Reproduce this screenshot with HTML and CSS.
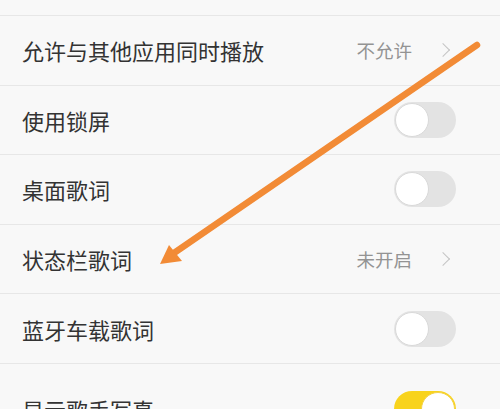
FILE: index.html
```html
<!DOCTYPE html>
<html lang="zh-CN">
<head>
    <meta charset="UTF-8">
    <meta name="viewport" content="width=device-width, initial-scale=1.0">
    <title>播放设置</title>
    <link rel="stylesheet" href="styles.css">
</head>
<body>

<!-- Settings list -->
<div class="settings-list">
    <!-- row above, scrolled out of view -->
    <div class="setting-row">
        <span class="setting-title"></span>
        <span class="switch"><span class="knob"></span></span>
    </div>
    <div class="setting-row">
        <span class="setting-title">允许与其他应用同时播放</span>
        <span class="setting-value">不允许<span class="chevron"></span></span>
    </div>
    <div class="setting-row">
        <span class="setting-title">使用锁屏</span>
        <span class="switch"><span class="knob"></span></span>
    </div>
    <div class="setting-row">
        <span class="setting-title">桌面歌词</span>
        <span class="switch"><span class="knob"></span></span>
    </div>
    <div class="setting-row">
        <span class="setting-title">状态栏歌词</span>
        <span class="setting-value">未开启<span class="chevron"></span></span>
    </div>
    <div class="setting-row">
        <span class="setting-title">蓝牙车载歌词</span>
        <span class="switch"><span class="knob"></span></span>
    </div>
    <div class="setting-row last">
        <span class="setting-title">显示歌手写真</span>
        <span class="switch on"><span class="knob"></span></span>
    </div>
</div>

<!-- Orange arrow drawn over the list -->
<svg class="arrow" width="500" height="409" viewBox="0 0 500 409">
    <line x1="477" y1="45" x2="174" y2="253" stroke="#f28b36" stroke-width="6.5" stroke-linecap="round"/>
    <polygon points="160,264 169,245 182,261" fill="#f28b36"/>
</svg>

</body>
</html>
```

FILE: styles.css
```css
/* General styles */
body {
    font-family: "Noto Sans CJK SC", "Noto Sans", sans-serif;
    background-color: #f8f8f8;
    margin: 0;
    padding: 0;
    width: 500px;
    height: 409px;
    overflow: hidden;
    position: relative;
}

/* List is scrolled, first row is mostly off screen */
.settings-list {
    margin-top: -53.6px;
}

.setting-row {
    box-sizing: border-box;
    height: 69.6px;
    display: flex;
    align-items: center;
    justify-content: space-between;
    padding: 0 44px 0 22px;
    border-bottom: 1px solid #e7e7e7;
}

.setting-row.last {
    padding-top: 20px;
    border-bottom: none;
}

.setting-title {
    font-size: 22px;
    color: #333;
}

.setting-value {
    display: flex;
    align-items: center;
    gap: 26px;
    font-size: 18.5px;
    color: #939393;
    margin-right: 4px;
}

/* Right arrow */
.chevron {
    width: 9px;
    height: 9px;
    border-top: 1.5px solid #c4c4c4;
    border-right: 1.5px solid #c4c4c4;
    transform: rotate(45deg);
    margin-right: 4px;
}

/* Toggle switch */
.switch {
    box-sizing: border-box;
    width: 62px;
    height: 36px;
    border-radius: 18px;
    background-color: #e3e3e3;
    display: flex;
    align-items: center;
    padding: 0 1px;
}

.switch .knob {
    box-sizing: border-box;
    width: 34px;
    height: 34px;
    border-radius: 50%;
    background-color: #fff;
    border: 1px solid #d9d9d9;
}

.switch.on {
    background-color: #f8d31c;
    justify-content: flex-end;
}

.switch.on .knob {
    border-color: #f3d24a;
}

/* Overlay arrow */
.arrow {
    position: absolute;
    top: 0;
    left: 0;
    pointer-events: none;
}
```
